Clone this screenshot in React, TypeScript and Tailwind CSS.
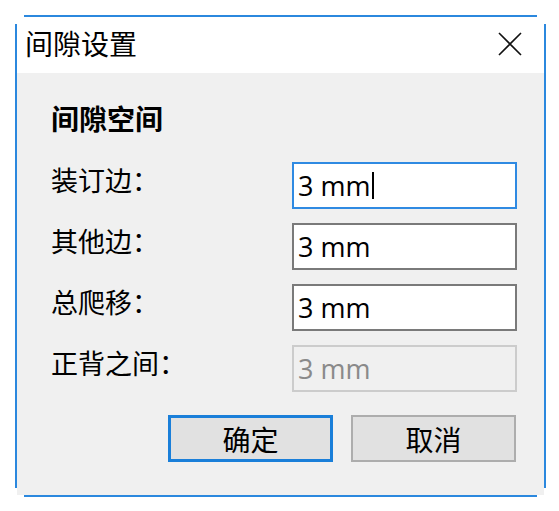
const cjk = "font-['Noto_Sans_CJK_SC',sans-serif]";
const latin = "font-['Open_Sans','Noto_Sans_CJK_SC',sans-serif]";

const rows = [
    { label: "装订边：", value: "3 mm", state: "focus" },
    { label: "其他边：", value: "3 mm", state: "normal" },
    { label: "总爬移：", value: "3 mm", state: "normal" },
    { label: "正背之间：", value: "3 mm", state: "disabled" },
];

function Field({ value, state }: { value: string; state: string }) {
    const box =
        state === "focus"
            ? "border-[#2f8ae2] bg-white text-black"
            : state === "disabled"
              ? "border-[#cccccc] bg-[#f0f0f0] text-[#8a8a8a]"
              : "border-[#7a7a7a] bg-white text-black";
    return (
        <div className={`flex h-[47px] w-[225px] items-center border-2 pl-[4px] ${box}`}>
            <span className={`${latin} text-[27px] leading-none`}>{value}</span>
            {state === "focus" && <span className="ml-[2px] h-[27px] w-[2px] bg-black" />}
        </div>
    );
}

export default function App() {
    return (
        <div className="h-[511px] w-[559px] bg-white pl-[15px] pt-[15px]">
            <div className="flex w-[531px] flex-col">
                <div className="ml-[9px] h-[2px] w-[513px] bg-[#2b88de]" />
                <div className="flex">
                    <div className="my-[7px] w-[2px] bg-[#2b88de]" />
                    <div className="flex h-[478px] w-[527px] flex-col">
                        <div className="flex h-[56px] items-center justify-between bg-white pl-[8px] pr-[22px]">
                            <span className={`${cjk} pb-[4px] text-[28px] leading-none text-black`}>间隙设置</span>
                            <svg width="24" height="24" viewBox="0 0 24 24" className="mt-[-2px]">
                                <path d="M1 1 L23 23 M23 1 L1 23" stroke="#111" strokeWidth="1.6" fill="none" />
                            </svg>
                        </div>
                        <div className={`${cjk} flex flex-1 flex-col bg-[#f0f0f0] pl-[34px] pt-[31px] text-black`}>
                            <div className="text-[28px] font-bold leading-[28px]">间隙空间</div>
                            <div className="mt-[30px] grid grid-cols-[241px_225px] gap-y-[14px]">
                                {rows.map((r) => (
                                    <div key={r.label} className="contents">
                                        <div className="flex h-[47px] items-center pb-[12px] text-[27px] leading-none">
                                            {r.label}
                                        </div>
                                        <Field value={r.value} state={r.state} />
                                    </div>
                                ))}
                            </div>
                            <div className="ml-[117px] mt-[23px] flex gap-[18px]">
                                <button className="flex h-[47px] w-[165px] items-center justify-center border-[3px] border-[#1a7fd9] bg-[#e1e1e1] text-[28px] leading-none">
                                    确定
                                </button>
                                <button className="flex h-[47px] w-[165px] items-center justify-center border-2 border-[#adadad] bg-[#e1e1e1] text-[28px] leading-none">
                                    取消
                                </button>
                            </div>
                        </div>
                    </div>
                    <div className="my-[7px] w-[2px] bg-[#2b88de]" />
                </div>
                <div className="ml-[9px] h-[2px] w-[513px] bg-[#2b88de]" />
            </div>
        </div>
    );
}
